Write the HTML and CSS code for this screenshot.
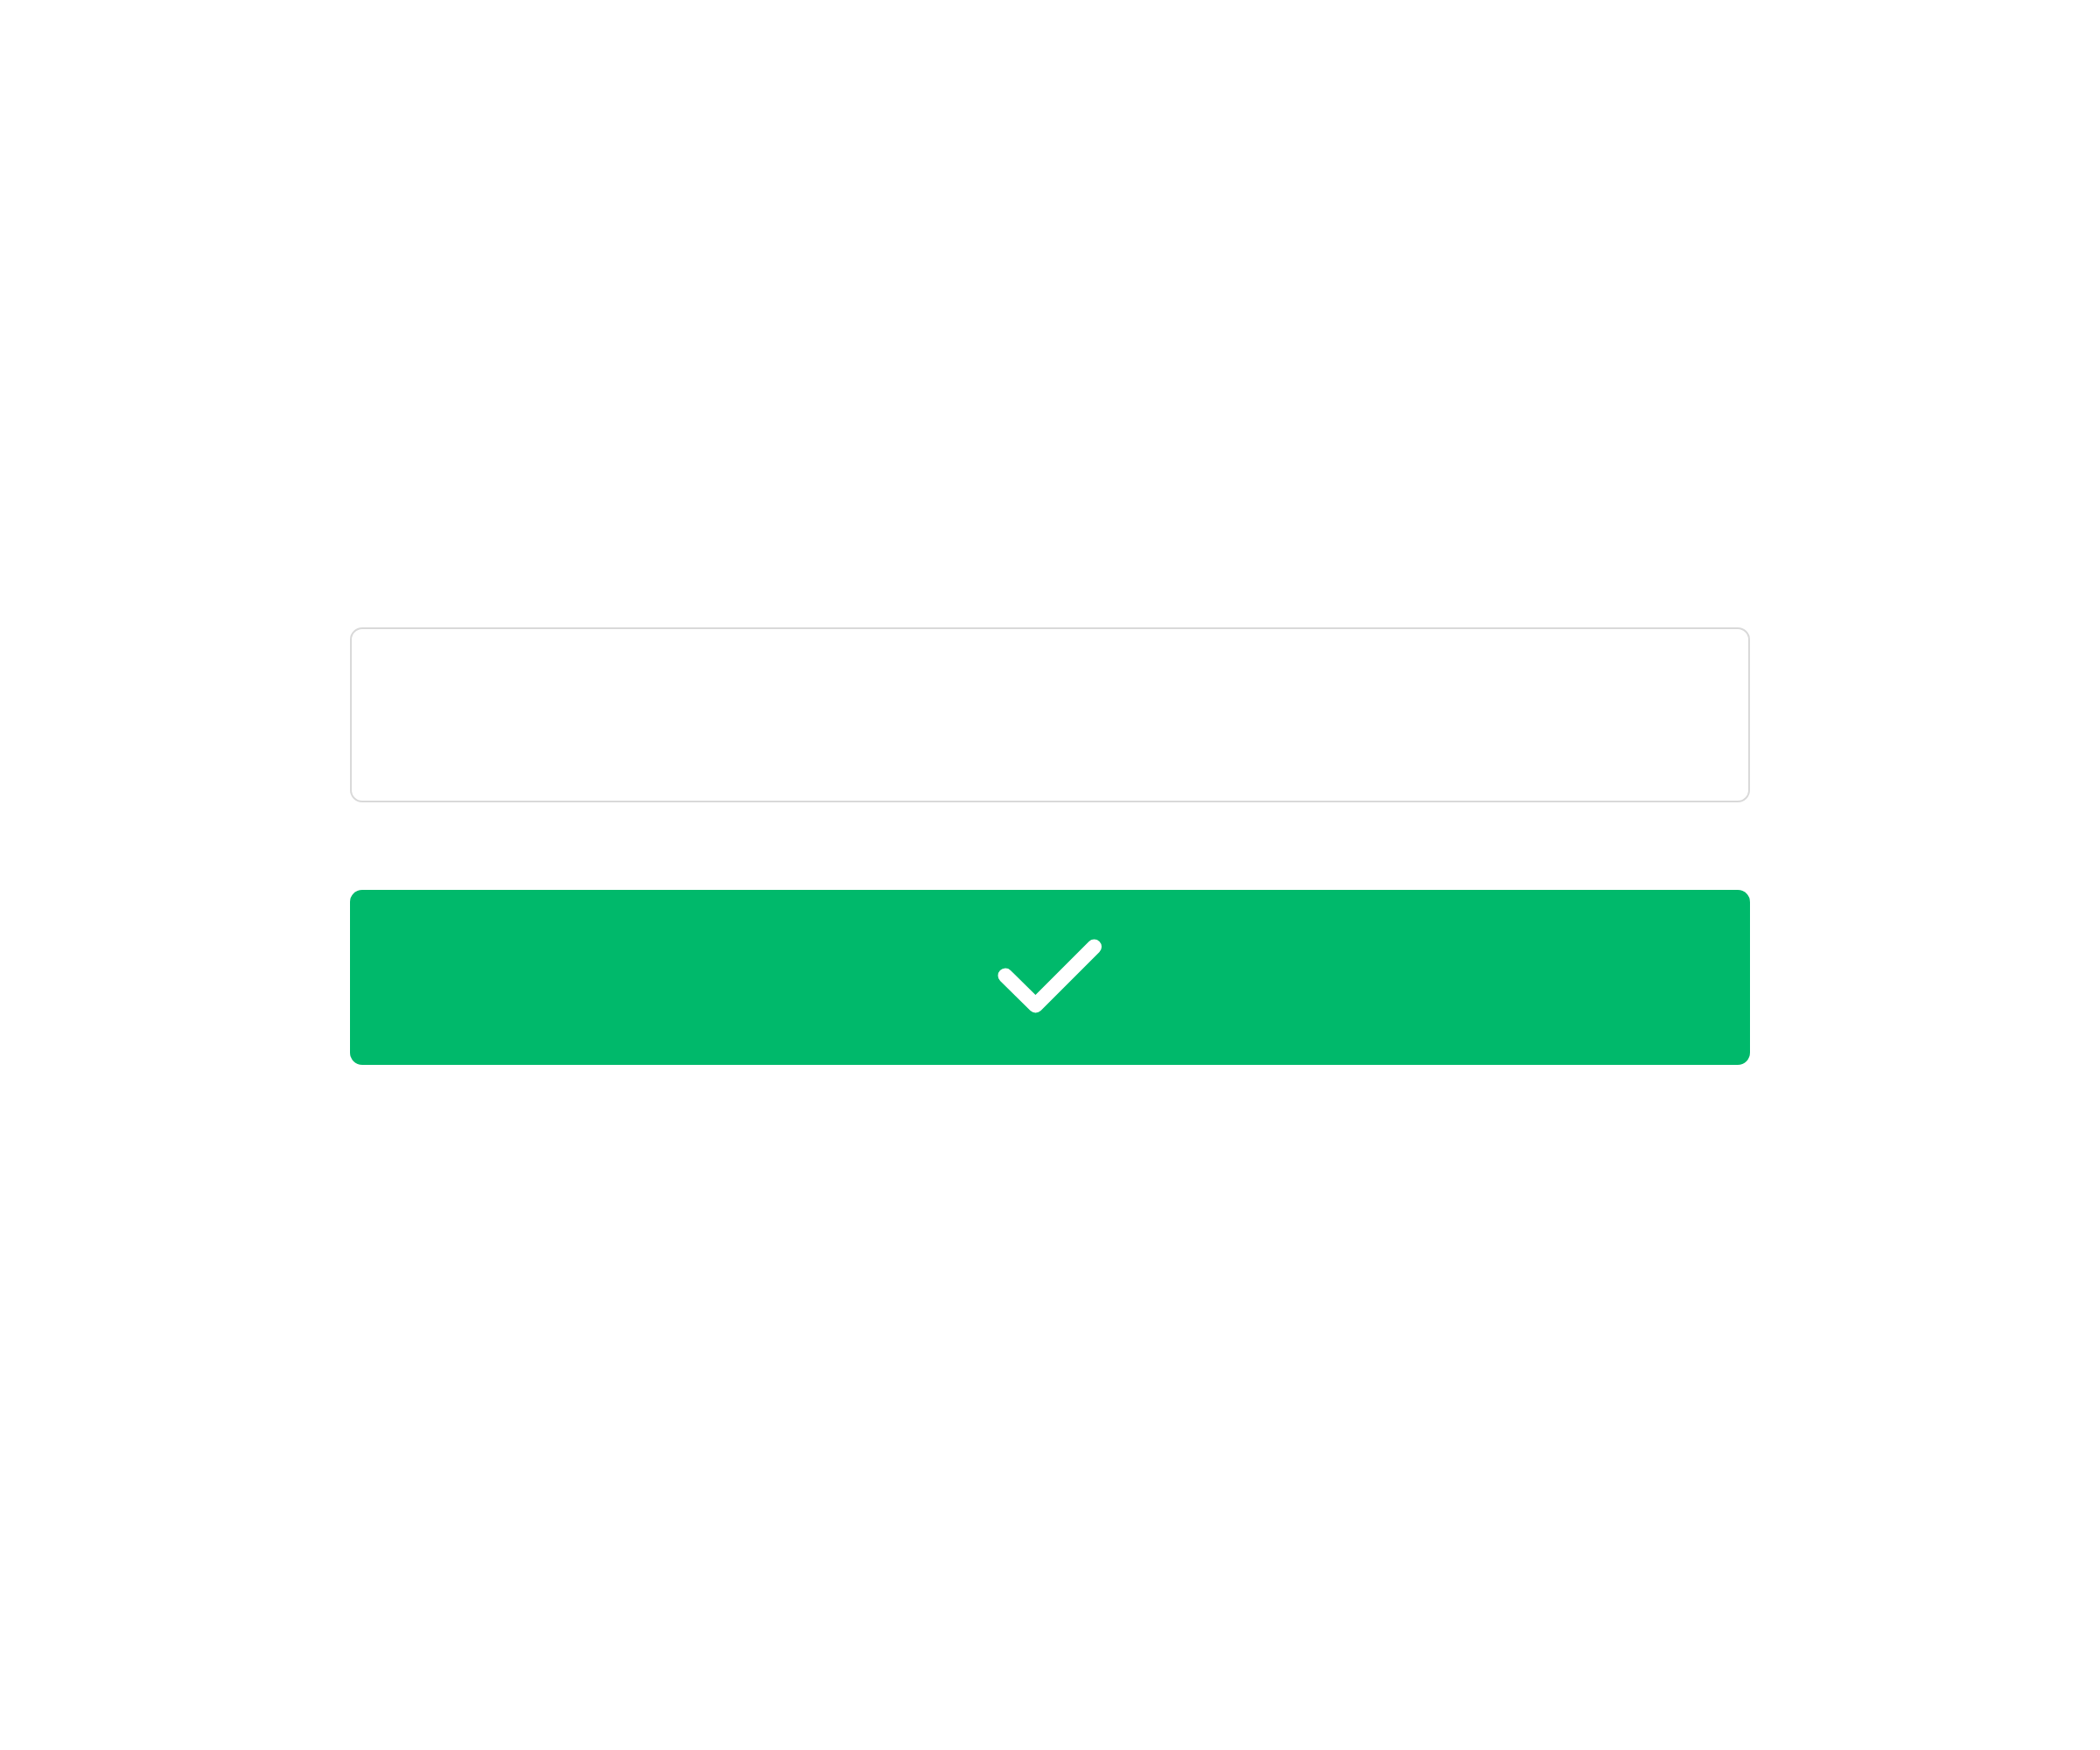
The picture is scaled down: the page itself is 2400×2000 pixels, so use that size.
FILE: index.html
```html
<!DOCTYPE html>
<html>
<head>
<meta charset="utf-8">
<link rel="stylesheet" href="styles.css">
</head>
<body>
<main class="page">
  <form class="form">
    <input class="field" type="text" aria-label="input">
    <button class="submit" type="button" aria-label="Submit">
      <svg class="check" width="120" height="120" viewBox="0 0 120 120">
        <polyline points="9,58 43.5,92 110.5,25" fill="none" stroke="#fff" stroke-width="17" stroke-linecap="round" stroke-linejoin="round"/>
      </svg>
    </button>
  </form>
</main>
</body>
</html>
```
FILE: styles.css
```css
html, body {
  margin: 0;
  padding: 0;
  background: #ffffff;
  font-family: "Liberation Sans", Arial, sans-serif;
}
.page {
  display: flex;
  justify-content: center;
  padding-top: 717px;
}
.form {
  width: 1600px;
  display: flex;
  flex-direction: column;
  gap: 100px;
  margin: 0;
}
.field {
  box-sizing: border-box;
  width: 100%;
  height: 200px;
  border: 2px solid #d9d9d9;
  border-radius: 14px;
  background: #fff;
  margin: 0;
  padding: 0 30px;
  outline: none;
}
.submit {
  box-sizing: border-box;
  width: 100%;
  height: 200px;
  border: none;
  border-radius: 14px;
  background: #00b96b;
  margin: 0;
  padding: 0;
  display: flex;
  align-items: center;
  justify-content: center;
}
.check {
  display: block;
}
```
